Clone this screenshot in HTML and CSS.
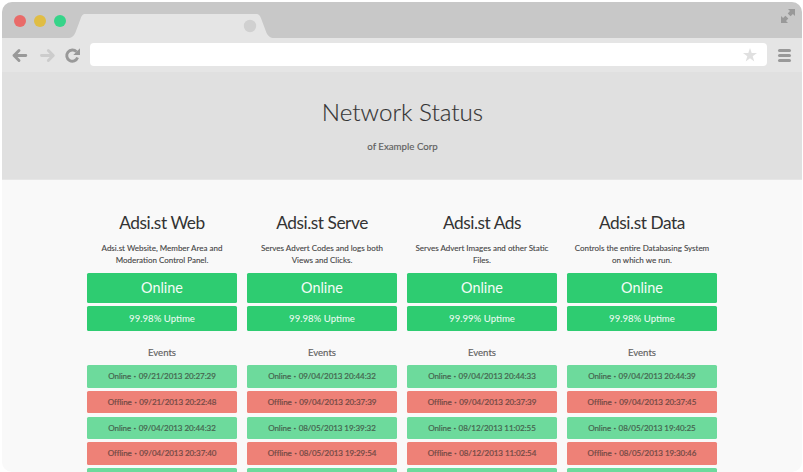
FILE: index.html
```
<!DOCTYPE html>
<html lang="en">
<head>
<meta charset="utf-8">
<title>Network Status</title>
<link rel="stylesheet" href="styles.css">
</head>
<body>
<div class="window">
  <div class="titlebar">
    <div class="lights"><i class="light red"></i><i class="light yellow"></i><i class="light green"></i></div>
    <svg class="tab" width="206" height="24" viewBox="0 0 206 24"><path d="M0 24C4 23.500 5.500 21 7 17L11.500 5C12.700 1.500 13.500 0 16.500 0H187C190 0 191 1.500 192.300 5L196.800 17C198.300 21 200 23.500 204 24Z" fill="#e5e5e5"/><circle cx="181" cy="12" r="6.200" fill="#d0d0d0"/></svg>
    <svg class="expand" width="16" height="16" viewBox="0 0 16 16" fill="#999"><path d="M8 1H15V8L12.900 6L10.600 8.300L7.700 5.400L10 3.100ZM1 8L3.100 10L5.400 7.700L8.300 10.600L6 12.900L8 15H1Z"/></svg>
  </div>
  <div class="toolbar">
    <svg class="nav" width="76" height="34" viewBox="0 0 76 34" fill="none" stroke-linecap="round" stroke-linejoin="round" stroke-width="2.900"><path d="M23.800 17.500H12M17 12.500L12 17.500L17 22.500" stroke="#999"/><path d="M39.500 17.500H51M46.300 12.500L51.300 17.500L46.300 22.500" stroke="#ccc"/><path d="M75.600 19.500A5.600 5.600 0 1 1 74.500 13.800" stroke="#999" stroke-linecap="butt"/><path d="M78 10.200V16.900H71.300Z" fill="#999"/></svg>
    <div class="address"><svg width="14" height="14" viewBox="0 0 14 14"><path d="M7 0L8.700 5H14L9.700 8.200L11.300 13.500L7 10.300L2.700 13.500L4.300 8.200L0 5H5.300Z" fill="#e0e0e0"/></svg></div>
    <div class="menu"><i></i><i></i><i></i></div>
  </div>
  <header class="hero"><h1>Network Status</h1><p>of Example Corp</p></header>
  <main class="services">
    <section class="service">
      <h2>Adsi.st Web</h2>
      <p class="about">Adsi.st Website, Member Area and<br>Moderation Control Panel.</p>
      <div class="state">Online</div>
      <div class="uptime">99.98% Uptime</div>
      <h3>Events</h3>
      <div class="event on">Online <b>·</b> 09/21/2013 20:27:29</div>
      <div class="event off">Offline <b>·</b> 09/21/2013 20:22:48</div>
      <div class="event on">Online <b>·</b> 09/04/2013 20:44:32</div>
      <div class="event off">Offline <b>·</b> 09/04/2013 20:37:40</div>
      <div class="event on"></div>
    </section>
    <section class="service">
      <h2>Adsi.st Serve</h2>
      <p class="about">Serves Advert Codes and logs both<br>Views and Clicks.</p>
      <div class="state">Online</div>
      <div class="uptime">99.98% Uptime</div>
      <h3>Events</h3>
      <div class="event on">Online <b>·</b> 09/04/2013 20:44:32</div>
      <div class="event off">Offline <b>·</b> 09/04/2013 20:37:39</div>
      <div class="event on">Online <b>·</b> 08/05/2013 19:39:32</div>
      <div class="event off">Offline <b>·</b> 08/05/2013 19:29:54</div>
      <div class="event on"></div>
    </section>
    <section class="service">
      <h2>Adsi.st Ads</h2>
      <p class="about">Serves Advert Images and other Static<br>Files.</p>
      <div class="state">Online</div>
      <div class="uptime">99.99% Uptime</div>
      <h3>Events</h3>
      <div class="event on">Online <b>·</b> 09/04/2013 20:44:33</div>
      <div class="event off">Offline <b>·</b> 09/04/2013 20:37:39</div>
      <div class="event on">Online <b>·</b> 08/12/2013 11:02:55</div>
      <div class="event off">Offline <b>·</b> 08/12/2013 11:02:54</div>
      <div class="event on"></div>
    </section>
    <section class="service">
      <h2>Adsi.st Data</h2>
      <p class="about">Controls the entire Databasing System<br>on which we run.</p>
      <div class="state">Online</div>
      <div class="uptime">99.98% Uptime</div>
      <h3>Events</h3>
      <div class="event on">Online <b>·</b> 09/04/2013 20:44:39</div>
      <div class="event off">Offline <b>·</b> 09/04/2013 20:37:45</div>
      <div class="event on">Online <b>·</b> 08/05/2013 19:40:25</div>
      <div class="event off">Offline <b>·</b> 08/05/2013 19:30:46</div>
      <div class="event on"></div>
    </section>
  </main>
</div>
</body>
</html>
```
FILE: styles.css
```
* { box-sizing: border-box; }
html { overflow: hidden; }
body { margin: 0; padding: 2px 1px 0 2px; height: 472px; background: #fff; font-family: Lato, sans-serif; overflow: hidden; }
h1, h2, h3, p { margin: 0; }
.window { height: 470px; border-radius: 10px; overflow: hidden; background: #f9f9f9; }
.titlebar { height: 36px; background: #c8c8c8; display: flex; align-items: flex-end; }
.lights { display: flex; gap: 8px; padding: 0 0 11px 12px; width: 67px; }
.light { width: 12px; height: 12px; border-radius: 50%; flex: none; }
.red { background: #e96b69; }
.yellow { background: #e0bd44; }
.green { background: #36d489; }
.tab { display: block; }
.expand { margin: 0 6px 14px auto; }
.toolbar { height: 34px; background: #e5e5e5; display: flex; align-items: center; }
.nav { overflow: visible; flex: none; }
.address { margin-left: 12px; width: 677px; height: 23px; margin-bottom: 1px; background: #fff; border-radius: 4px; display: flex; align-items: center; justify-content: flex-end; padding-right: 10px; }
.menu { margin-left: 11px; display: grid; gap: 2px; }
.menu i { width: 13px; height: 3px; border-radius: 1.5px; background: #999; }
.hero { height: 108px; background: #e0e0e0; border-bottom: 1px solid #e6e6e6; text-align: center; color: #333; padding-top: 24px; padding-left: 1px; }
.hero h1 { font-size: 24.2px; font-weight: 300; line-height: 32px; -webkit-text-stroke: 0.15px; }
.hero p { font-size: 9.7px; line-height: 14px; margin-top: 11px; color: #606060; -webkit-text-stroke: 0.15px; }
.services { display: grid; grid-template-columns: repeat(4, 150.4px); column-gap: 9.6px; padding: 30px 0 0 84.8px; text-align: center; }
.service h2 { font-size: 17.3px; font-weight: 400; line-height: 26px; color: #333; letter-spacing: -0.45px; }
.about { font-size: 8px; line-height: 12px; margin-top: 6px; height: 31px; color: #444; white-space: nowrap; -webkit-text-stroke: 0.1px; }
.state, .uptime, .event { border-radius: 1.6px; }
.state, .uptime { background: #2ecc71; color: #f4fcf7; }
.state { height: 29.6px; line-height: 29.6px; font-size: 14.4px; }
.uptime { height: 25.6px; line-height: 25.6px; margin-top: 3.2px; font-size: 9.6px; }
.service h3 { font-size: 9.6px; font-weight: 400; line-height: 14px; margin: 14.3px 0 5.4px; color: #606060; -webkit-text-stroke: 0.15px; }
.event { height: 22.6px; line-height: 22.6px; margin-bottom: 3.2px; font-size: 8px; letter-spacing: -0.06px; color: #45644f; white-space: nowrap; -webkit-text-stroke: 0.2px; }
.event b { margin: 0 0.7px; }
.on { background: #6dda9c; }
.off { background: #ee8177; color: #714944; }
```
